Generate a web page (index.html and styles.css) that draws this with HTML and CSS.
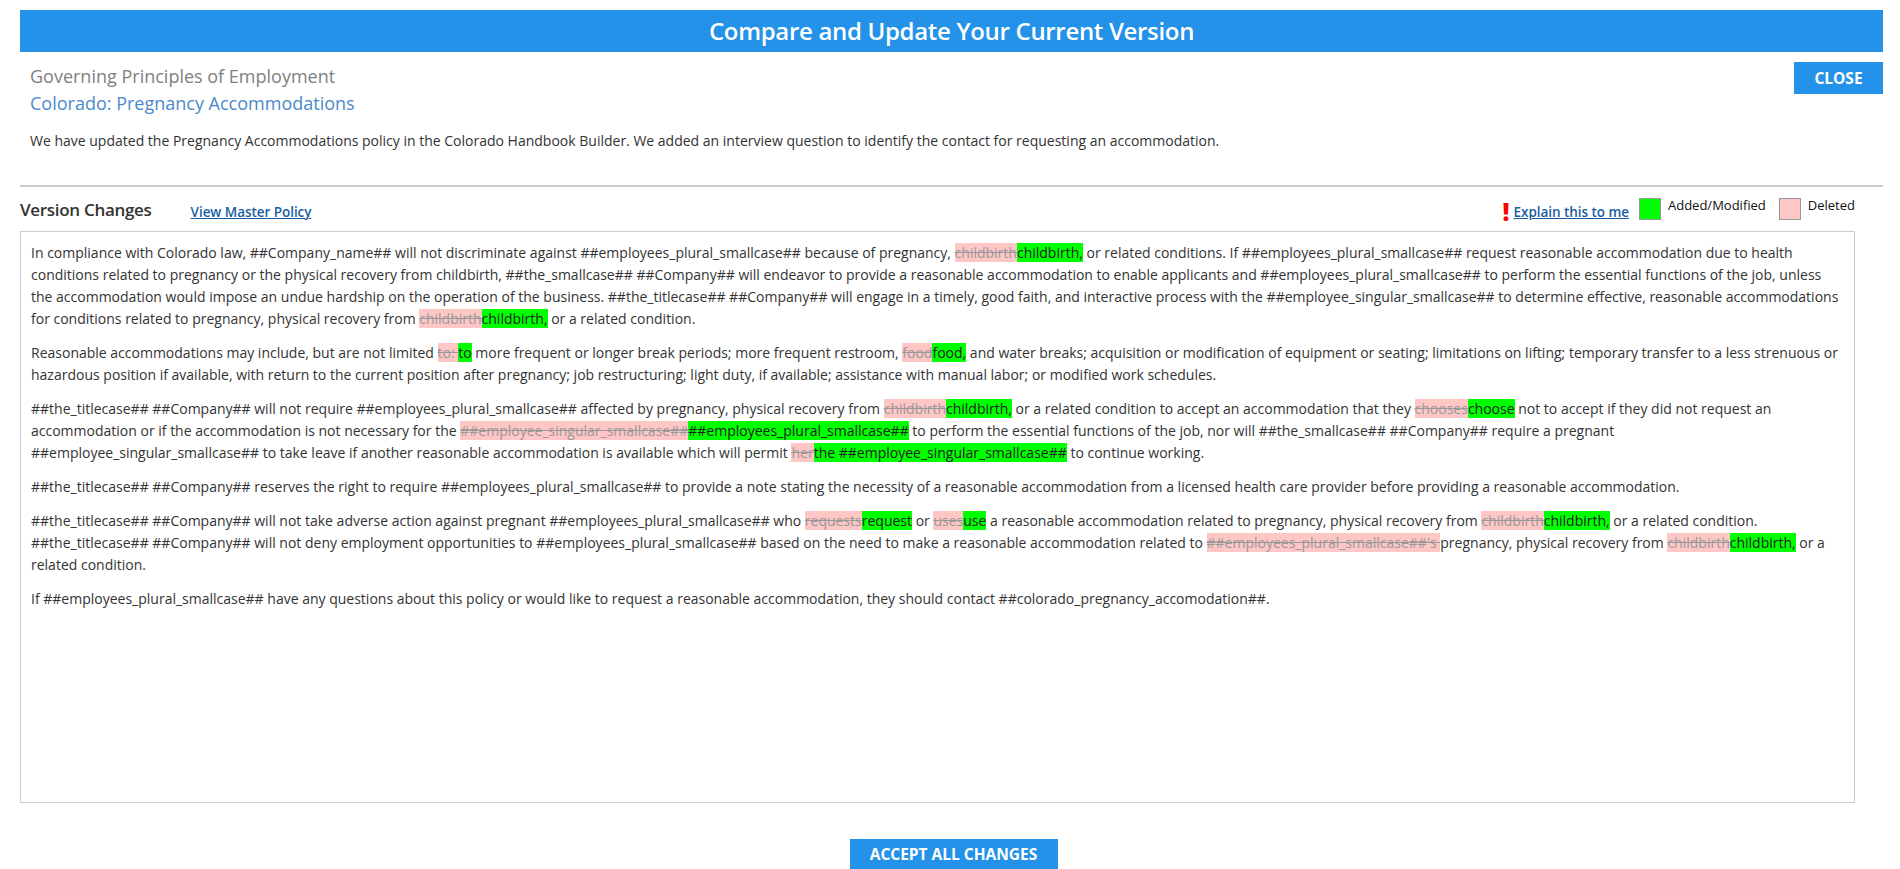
FILE: index.html
```html
<!DOCTYPE html>
<html lang="en">
<head>
<meta charset="utf-8">
<title>Compare and Update Your Current Version</title>
<link rel="stylesheet" href="styles.css">
</head>
<body>
<div class="page">
  <h1 class="banner">Compare and Update Your Current Version</h1>
  <header class="intro">
    <div class="intro-text">
      <div class="section-name">Governing Principles of Employment</div>
      <div class="policy-name">Colorado: Pregnancy Accommodations</div>
      <p class="summary">We have updated the Pregnancy Accommodations policy in the Colorado Handbook Builder. We added an interview question to identify the contact for requesting an accommodation.</p>
    </div>
    <button class="btn btn-close">CLOSE</button>
  </header>
  <hr class="rule">
  <div class="changes-bar">
    <h2 class="changes-title">Version Changes</h2>
    <a class="link master" href="#">View Master Policy</a>
    <div class="legend">
      <span class="bang">!</span>
      <a class="link explain" href="#">Explain this to me</a>
      <span class="swatch swatch-add"></span><span class="legend-label">Added/Modified</span>
      <span class="swatch swatch-del"></span><span class="legend-label">Deleted</span>
    </div>
  </div>
  <div class="diff">
    <p>In compliance with Colorado law, ##Company_name## will not discriminate against ##employees_plural_smallcase## because of pregnancy, <del>childbirth</del><ins>childbirth,</ins> or related conditions. If ##employees_plural_smallcase## request reasonable accommodation due to health conditions related to pregnancy or the physical recovery from childbirth, ##the_smallcase## ##Company## will endeavor to provide a reasonable accommodation to enable applicants and ##employees_plural_smallcase## to perform the essential functions of the job, unless the accommodation would impose an undue hardship on the operation of the business. ##the_titlecase## ##Company## will engage in a timely, good faith, and interactive process with the ##employee_singular_smallcase## to determine effective, reasonable accommodations for conditions related to pregnancy, physical recovery from <del>childbirth</del><ins>childbirth,</ins> or a related condition.</p>
    <p>Reasonable accommodations may include, but are not limited <del>to:&nbsp;</del><ins>to</ins> more frequent or longer break periods; more frequent restroom, <del>food</del><ins>food,</ins> and water breaks; acquisition or modification of equipment or seating; limitations on lifting; temporary transfer to a less strenuous or hazardous position if available, with return to the current position after pregnancy; job restructuring; light duty, if available; assistance with manual labor; or modified work schedules.</p>
    <p>##the_titlecase## ##Company## will not require ##employees_plural_smallcase## affected by pregnancy, physical recovery from <del>childbirth</del><ins>childbirth,</ins> or a related condition to accept an accommodation that they <del>chooses</del><ins>choose</ins> not to accept if they did not request an accommodation or if the accommodation is not necessary for the <del>##employee_singular_smallcase##</del><ins>##employees_plural_smallcase##</ins> to perform the essential functions of the job, nor will ##the_smallcase## ##Company## require a pregnant ##employee_singular_smallcase## to take leave if another reasonable accommodation is available which will permit <del>her</del><ins>the ##employee_singular_smallcase##</ins> to continue working.</p>
    <p>##the_titlecase## ##Company## reserves the right to require ##employees_plural_smallcase## to provide a note stating the necessity of a reasonable accommodation from a licensed health care provider before providing a reasonable accommodation.</p>
    <p>##the_titlecase## ##Company## will not take adverse action against pregnant ##employees_plural_smallcase## who <del>requests</del><ins>request</ins> or <del>uses</del><ins>use</ins> a reasonable accommodation related to pregnancy, physical recovery from <del>childbirth</del><ins>childbirth,</ins> or a related condition.<br>##the_titlecase## ##Company## will not deny employment opportunities to ##employees_plural_smallcase## based on the need to make a reasonable accommodation related to <del>##employees_plural_smallcase##'s&nbsp;</del>pregnancy, physical recovery from <del>childbirth</del><ins>childbirth,</ins> or a related condition.</p>
    <p>If ##employees_plural_smallcase## have any questions about this policy or would like to request a reasonable accommodation, they should contact ##colorado_pregnancy_accomodation##.</p>
  </div>
  <div class="actions">
    <button class="btn btn-accept">ACCEPT ALL CHANGES</button>
  </div>
</div>
</body>
</html>
```
FILE: styles.css
```css
* { box-sizing: border-box; }
html, body { margin: 0; padding: 0; height: 869px; overflow: hidden; background: #fff; }
body { font-family: "Open Sans", sans-serif; font-size: 14px; color: #333; }
.page { padding: 10px 17px 0 20px; }
.banner {
  margin: 0;
  height: 42px;
  background: #2392e8;
  color: #fff;
  font-size: 24px;
  font-weight: 600;
  letter-spacing: -0.32px;
  line-height: 42px;
  text-align: center;
}
.intro { display: flex; justify-content: space-between; align-items: flex-start; padding: 11px 0 0 10px; height: 133px; }
.section-name { font-size: 18px; line-height: 27px; color: #808080; }
.policy-name { font-size: 18px; line-height: 27px; color: #4a8ac9; }
.summary { margin: 14px 0 0; font-size: 14px; line-height: 20px; color: #333; }
.btn {
  border: 0;
  background: #2392e8;
  color: #fff;
  font-family: "Open Sans", sans-serif;
  font-weight: 700;
  font-size: 15.5px;
  padding: 0;
}
.btn-close { width: 89px; height: 32px; margin-top: -1px; }
.rule { margin: 0; border: 0; border-top: 2px solid #ccc; }
.changes-bar { display: flex; align-items: center; height: 44px; }
.changes-title { margin: 2px 39px 0 0; font-size: 17px; font-weight: 600; letter-spacing: -0.3px; color: #333; line-height: 24px; }
.link { color: #1a5ea0; font-weight: 600; font-size: 13.5px; letter-spacing: -0.05px; text-decoration: underline; position: relative; top: 3px; }
.legend { margin-left: auto; display: flex; align-items: center; padding-right: 28px; }
.bang { color: #f00; font-weight: 800; font-size: 24px; line-height: 22px; margin-right: 4px; position: relative; top: 3px; }
.swatch { width: 22px; height: 22px; border: 1px solid #999; margin-left: 10px; }
.swatch-add { background: #0f0; }
.swatch-del { background: #ffc6c6; margin-left: 13px; }
.legend-label { margin-left: 7px; font-size: 13px; color: #111; position: relative; top: -4px; }
.diff {
  height: 572px;
  width: 1835px;
  border: 1px solid #ccc;
  padding: 10px 10px 0 10px;
  font-size: 14px;
  line-height: 22px;
  color: #333;
}
.diff p { margin: 0 0 12px; }
.diff del { background: #ffc6c6; color: #999; text-decoration: line-through; }
.diff ins { background: #0f0; color: #222; text-decoration: none; }
.actions { display: flex; justify-content: center; padding: 36px 0 0 4px; }
.btn-accept { width: 208px; height: 30px; }
```
